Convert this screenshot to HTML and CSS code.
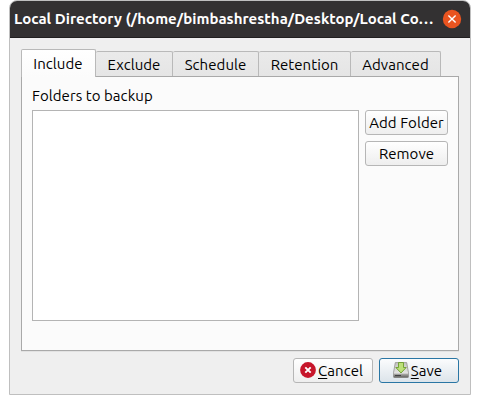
FILE: index.html
```html
<!DOCTYPE html>
<html lang="en">
<head>
<meta charset="utf-8">
<title>Local Directory</title>
<link rel="stylesheet" href="styles.css">
</head>
<body>
<div class="window">
  <header class="titlebar">
    <h1 class="title">Local Directory (/home/bimbashrestha/Desktop/Local Co…</h1>
    <svg class="close" width="20" height="20" viewBox="0 0 20 20"><circle cx="10" cy="10" r="9.2" fill="#e95420"/><path d="M6.4 6.4l7.2 7.2M13.6 6.4l-7.2 7.2" stroke="#fff" stroke-width="1.4"/></svg>
  </header>
  <main class="content">
    <nav class="tabs">
      <div class="tab active"><span>Include</span></div>
      <div class="tab exclude"><span>Exclude</span></div>
      <div class="tab schedule"><span>Schedule</span></div>
      <div class="tab retention"><span>Retention</span></div>
      <div class="tab advanced"><span>Advanced</span></div>
    </nav>
    <section class="panel">
      <div class="label"><span>Folders to backup</span></div>
      <div class="row">
        <div class="list"></div>
        <div class="side">
          <button class="btn"><span>Add Folder</span></button>
          <button class="btn"><span>Remove</span></button>
        </div>
      </div>
    </section>
    <footer class="footer">
      <button class="btn action">
        <svg class="icon" width="16" height="16" viewBox="0 0 16 16"><circle cx="8" cy="8" r="7.9" fill="#c7162b"/><path d="M5.3 5.3l5.4 5.4M10.7 5.3l-5.4 5.4" stroke="#fff" stroke-width="1.9"/></svg>
        <span><u>C</u>ancel</span>
      </button>
      <button class="btn action save">
        <svg class="icon" width="16" height="16" viewBox="0 0 16 16">
          <defs>
            <linearGradient id="top" x1="0" y1="0" x2="0" y2="1"><stop offset="0" stop-color="#c4c4c1"/><stop offset="1" stop-color="#f1f1ef"/></linearGradient>
            <linearGradient id="front" x1="0" y1="0" x2="0" y2="1"><stop offset="0" stop-color="#b5b5b2"/><stop offset="1" stop-color="#5c5c5a"/></linearGradient>
          </defs>
          <path d="M2.3.6h11.4l1.8 10.2v4q0 .8-.8.8H1.3q-.8 0-.8-.8v-4z" fill="url(#top)" stroke="#92928f" stroke-width=".8"/>
          <path d="M.6 11.5h14.8v3.3q0 .8-.8.8H1.4q-.8 0-.8-.8z" fill="url(#front)"/>
          <path d="M2 13.5h6" stroke="#444" stroke-width="1"/>
          <path d="M5.5.5h5v5h2.7L8 11 2.8 5.500h2.700z" fill="#bce078" stroke="#6b9d2b" stroke-width=".9"/>
        </svg>
        <span><u>S</u>ave</span>
      </button>
    </footer>
  </main>
</div>
</body>
</html>
```

FILE: styles.css
```css
* { box-sizing: border-box; }
body {
  margin: 0;
  background: #fff;
  color: #000;
  font: 15px/20px Ubuntu, "Noto Sans", sans-serif;
  letter-spacing: 0.06px;
  overflow: hidden;
}
span, .title { white-space: nowrap; }
.window {
  width: 462px;
  height: 395px;
  margin-left: 9px;
  border: 1px solid #bfbfbf;
  border-radius: 8px 8px 0 0;
  background: #efefef;
  overflow: hidden;
}
.titlebar {
  display: flex;
  align-items: center;
  justify-content: space-between;
  height: 37px;
  padding: 0 8px 0 4px;
  background: #333132;
  border-bottom: 1px solid #211f20;
}
.title {
  margin: 0;
  color: #fff;
  font-size: 15px;
  font-weight: 700;
  letter-spacing: 0.025px;
}
.content { padding: 11px 11px 0; }
.tabs { display: flex; align-items: flex-end; height: 27px; }
.tab {
  display: flex;
  justify-content: center;
  align-items: center;
  height: 25px;
  padding-top: 2px;
  border: 1px solid #b9b9b9;
  border-width: 1px 1px 0 0;
  border-radius: 2px 2px 0 0;
  background: linear-gradient(#eaeaea, #e5e5e5);
}
.tab.active {
  width: 75px;
  height: 28px;
  margin-bottom: -1px;
  padding: 0 1px 0 0;
  border-left-width: 1px;
  background: linear-gradient(#fff, #fbfbfb);
  position: relative;
}
.exclude { width: 77px; }
.schedule { width: 86px; }
.retention { width: 92px; }
.advanced { width: 90px; }
.panel {
  height: 275px;
  padding: 9px 10px 0;
  border: 1px solid #a9a9a9;
  background: #fbfbfb;
  box-shadow: 0 1px 0 #e2e2e2;
}
.label { height: 24px; }
.row { display: flex; gap: 6px; }
.list {
  width: 327px;
  height: 211px;
  border: 1px solid #b4b4b4;
  background: #fff;
}
.side { display: flex; flex-direction: column; gap: 6px; }
.btn {
  display: flex;
  align-items: center;
  justify-content: center;
  width: 83px;
  height: 25px;
  padding: 0;
  border: 1px solid #b6b6b6;
  border-radius: 3px;
  background: linear-gradient(#fff, #eee);
  color: #000;
  font: inherit;
  letter-spacing: inherit;
}
.footer { display: flex; justify-content: flex-end; gap: 6px; margin-top: 7px; }
.action { width: 80px; gap: 2px; padding-right: 3px; }
.save { border-color: #2a76a4; background: linear-gradient(#fbfcfd, #dce4ea); }
.icon { flex: none; margin-top: -1px; }
u { text-underline-offset: 2px; text-decoration-thickness: 1px; }
```
